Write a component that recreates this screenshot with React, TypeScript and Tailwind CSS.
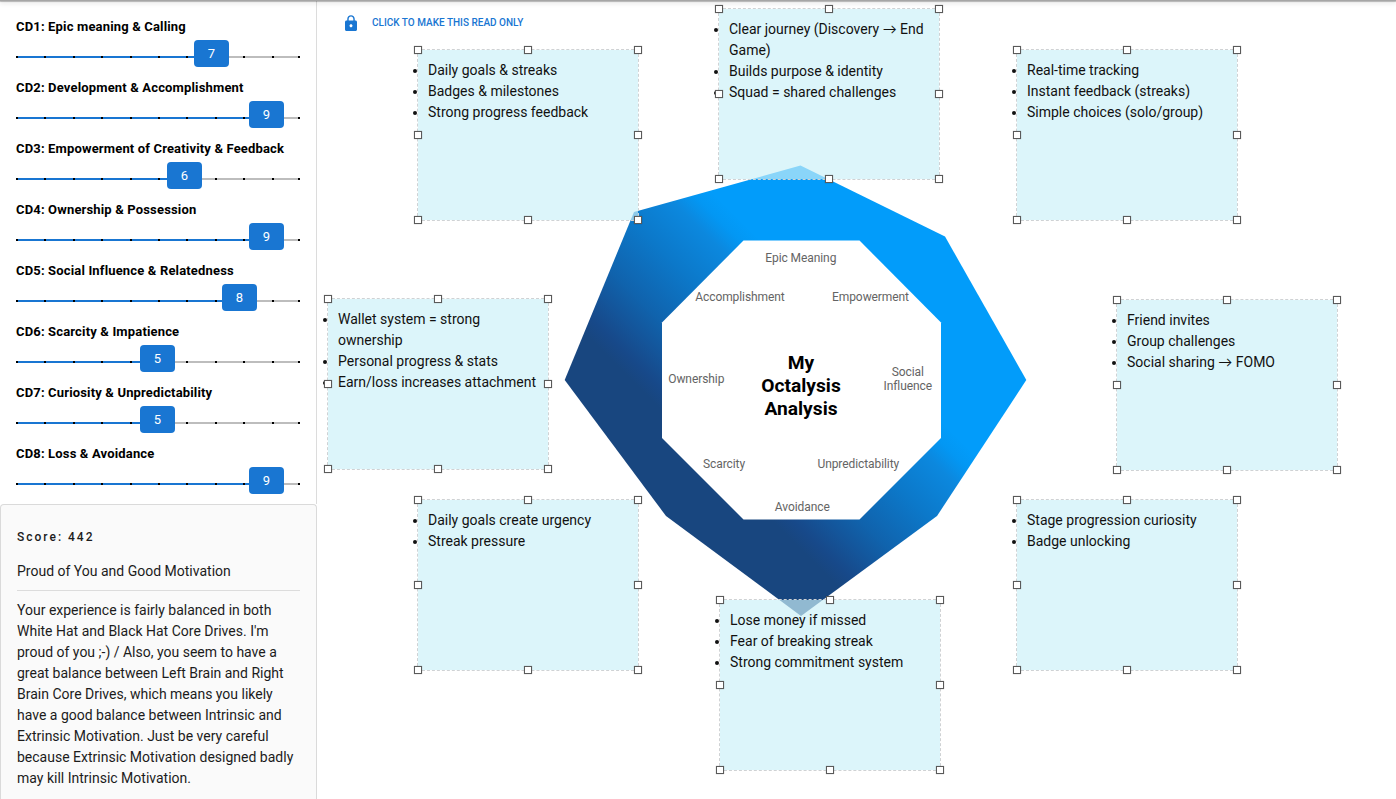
import React from 'react';

const drives = [
  { label: 'CD1: Epic meaning & Calling', value: 7 },
  { label: 'CD2: Development & Accomplishment', value: 9 },
  { label: 'CD3: Empowerment of Creativity & Feedback', value: 6 },
  { label: 'CD4: Ownership & Possession', value: 9 },
  { label: 'CD5: Social Influence & Relatedness', value: 8 },
  { label: 'CD6: Scarcity & Impatience', value: 5 },
  { label: 'CD7: Curiosity & Unpredictability', value: 5 },
  { label: 'CD8: Loss & Avoidance', value: 9 },
];

// positions are relative to the canvas
const notes = [
  { x: 100, y: 49, items: ['Daily goals & streaks', 'Badges & milestones', 'Strong progress feedback'] },
  { x: 401, y: 8, items: ['Clear journey (Discovery → End Game)', 'Builds purpose & identity', 'Squad = shared challenges'] },
  { x: 699, y: 49, items: ['Real-time tracking', 'Instant feedback (streaks)', 'Simple choices (solo/group)'] },
  { x: 10, y: 298, items: ['Wallet system = strong ownership', 'Personal progress & stats', 'Earn/loss increases attachment'] },
  { x: 799, y: 299, items: ['Friend invites', 'Group challenges', 'Social sharing → FOMO'] },
  { x: 100, y: 499, items: ['Daily goals create urgency', 'Streak pressure'] },
  { x: 699, y: 499, items: ['Stage progression curiosity', 'Badge unlocking'] },
  { x: 402, y: 599, items: ['Lose money if missed', 'Fear of breaking streak', 'Strong commitment system'] },
];

const chartLabels = [
  { text: 'Epic Meaning', x: 800.8, y: 262 },
  { text: 'Accomplishment', x: 740, y: 301 },
  { text: 'Empowerment', x: 870.5, y: 301 },
  { text: 'Ownership', x: 696.3, y: 383 },
  { text: 'Social', x: 907.8, y: 376 },
  { text: 'Influence', x: 907.8, y: 390 },
  { text: 'Scarcity', x: 724, y: 468 },
  { text: 'Unpredictability', x: 858.3, y: 468 },
  { text: 'Avoidance', x: 802.3, y: 511 },
];

function DriveSlider({ label, value }: { label: string; value: number }) {
  const offset = Math.round(-13.2 + 27.35 * value);

  return (
    <div className="h-[61px]">
      <div className="h-6 text-[13px] leading-5 font-bold tracking-[0.16px] text-black">{label}</div>
      <div className="relative -mt-px flex h-[27px] w-[284px] items-center">
        <div className="relative mt-[7px] h-0.5 w-full bg-[#bdbdbd]">
          <div className="h-full bg-[#1976d2]" style={{ width: offset + 10 }} />
          {Array.from({ length: 11 }, (_, i) => (
            <span
              key={i}
              className="absolute top-0 size-0.5 bg-black"
              style={{ left: Math.min(Math.round(i * 28.4), 282) }}
            />
          ))}
        </div>
        <div
          className="absolute inset-y-0 flex w-[35px] items-center justify-center rounded bg-[#1976d2] text-[13px] text-white"
          style={{ left: offset }}
        >
          {value}
        </div>
      </div>
    </div>
  );
}

function ResizeHandles() {
  return (
    <div className="absolute -inset-1 grid grid-cols-[8px_8px_8px] content-between justify-between">
      {Array.from({ length: 9 }, (_, i) => (
        <span
          key={i}
          className={i === 4 ? 'size-2' : 'size-2 border border-[#5a5a5a] bg-white shadow-[0_0_1px_rgba(0,0,0,0.35)]'}
        />
      ))}
    </div>
  );
}

function Note({ x, y, items }: { x: number; y: number; items: string[] }) {
  return (
    <div
      className="absolute h-[172px] w-[222px] border border-dashed border-[#cfd2d4] bg-[#cbf0f8]/68 bg-clip-padding"
      style={{ left: x, top: y }}
    >
      <ul className="list-outside list-disc p-2.5 text-sm leading-[21px] text-[#111]">
        {items.map((item) => (
          <li key={item}>{item}</li>
        ))}
      </ul>
      <ResizeHandles />
    </div>
  );
}

function OctalysisChart() {
  return (
    <svg
      className="ml-[247px] h-[452px] w-[463px]"
      viewBox="564 165 463 452"
      fontFamily="Roboto, sans-serif"
      textAnchor="middle"
    >
      <defs>
        <linearGradient id="ring" gradientUnits="userSpaceOnUse" x1="675" y1="423" x2="809" y2="289">
          <stop offset="0" stopColor="#18467f" />
          <stop offset="0.08" stopColor="#17498a" />
          <stop offset="0.33" stopColor="#1063ad" />
          <stop offset="0.59" stopColor="#0c78c9" />
          <stop offset="0.82" stopColor="#0c88de" />
          <stop offset="0.92" stopColor="#0397f3" />
          <stop offset="1" stopColor="#029cfa" />
        </linearGradient>
      </defs>
      <polygon
        points="800.5,165.5 945,236.5 1026.3,380 937,516 801,616 666,516 564.7,380 634,212"
        fill="url(#ring)"
      />
      <polygon points="743.5,240.5 859.5,240.5 941,322.5 941,438 859.5,519.5 743.5,519.5 662,438 662,322.5" fill="#fff" />
      <g fontSize="12" letterSpacing="-0.08" fill="#646464">
        {chartLabels.map((l) => (
          <text key={l.text} x={l.x} y={l.y}>
            {l.text}
          </text>
        ))}
      </g>
      <g fontSize="19.2" fontWeight="700" fill="#000">
        <text x="801" y="369">My</text>
        <text x="801" y="392">Octalysis</text>
        <text x="801" y="415">Analysis</text>
      </g>
    </svg>
  );
}

export default function App() {
  return (
    <div className="relative flex h-[799px] w-[1396px] overflow-hidden bg-white font-['Roboto','Lato',sans-serif]">
      <aside className="flex w-[317px] shrink-0 flex-col">
        <div className="h-[504px] border-r border-[#dcdcdc] pt-[17px] pl-4">
          {drives.map((d) => (
            <DriveSlider key={d.label} {...d} />
          ))}
        </div>
        <section className="flex-1 rounded-t border border-b-0 border-[#dadada] bg-[#fafafa] px-4 pt-[22px] text-sm leading-[21px] text-[#1c1c1c]">
          <p className="text-xs leading-5 font-medium tracking-[2px]">Score: 442</p>
          <p className="border-b border-[#dcdcdc] pt-3.5 pb-2">Proud of You and Good Motivation</p>
          <p className="-mr-0.5 pt-[9px]">
            Your experience is fairly balanced in both White Hat and Black Hat Core Drives. I'm proud of you ;-) /
            Also, you seem to have a great balance between Left Brain and Right Brain Core Drives, which means you
            likely have a good balance between Intrinsic and Extrinsic Motivation. Just be very careful because
            Extrinsic Motivation designed badly may kill Intrinsic Motivation.
          </p>
        </section>
      </aside>
      <main className="relative flex flex-1 flex-col items-start gap-[134px] pt-3.5">
        <button className="ml-7 flex h-[17px] items-center gap-[15px] text-[10px] font-medium text-[#1976d2]">
          <svg className="h-4 w-3" viewBox="4 1 16 21" fill="currentColor">
            <path d="M18 8h-1V6c0-2.76-2.24-5-5-5S7 3.24 7 6v2H6c-1.1 0-2 .9-2 2v10c0 1.1.9 2 2 2h12c1.1 0 2-.9 2-2V10c0-1.1-.9-2-2-2zm-6 9c-1.1 0-2-.9-2-2s.9-2 2-2 2 .9 2 2-.9 2-2 2zm3.1-9H8.9V6c0-1.71 1.39-3.1 3.1-3.1 1.71 0 3.1 1.39 3.1 3.1v2z" />
          </svg>
          CLICK TO MAKE THIS READ ONLY
        </button>
        <OctalysisChart />
        {notes.map((n) => (
          <Note key={n.items[0]} {...n} />
        ))}
      </main>
      <div className="absolute inset-x-0 top-0 h-px bg-[#a6a6a6] shadow-[0_1px_1px_rgba(0,0,0,0.3),0_2px_4px_rgba(0,0,0,0.25)]" />
    </div>
  );
}
